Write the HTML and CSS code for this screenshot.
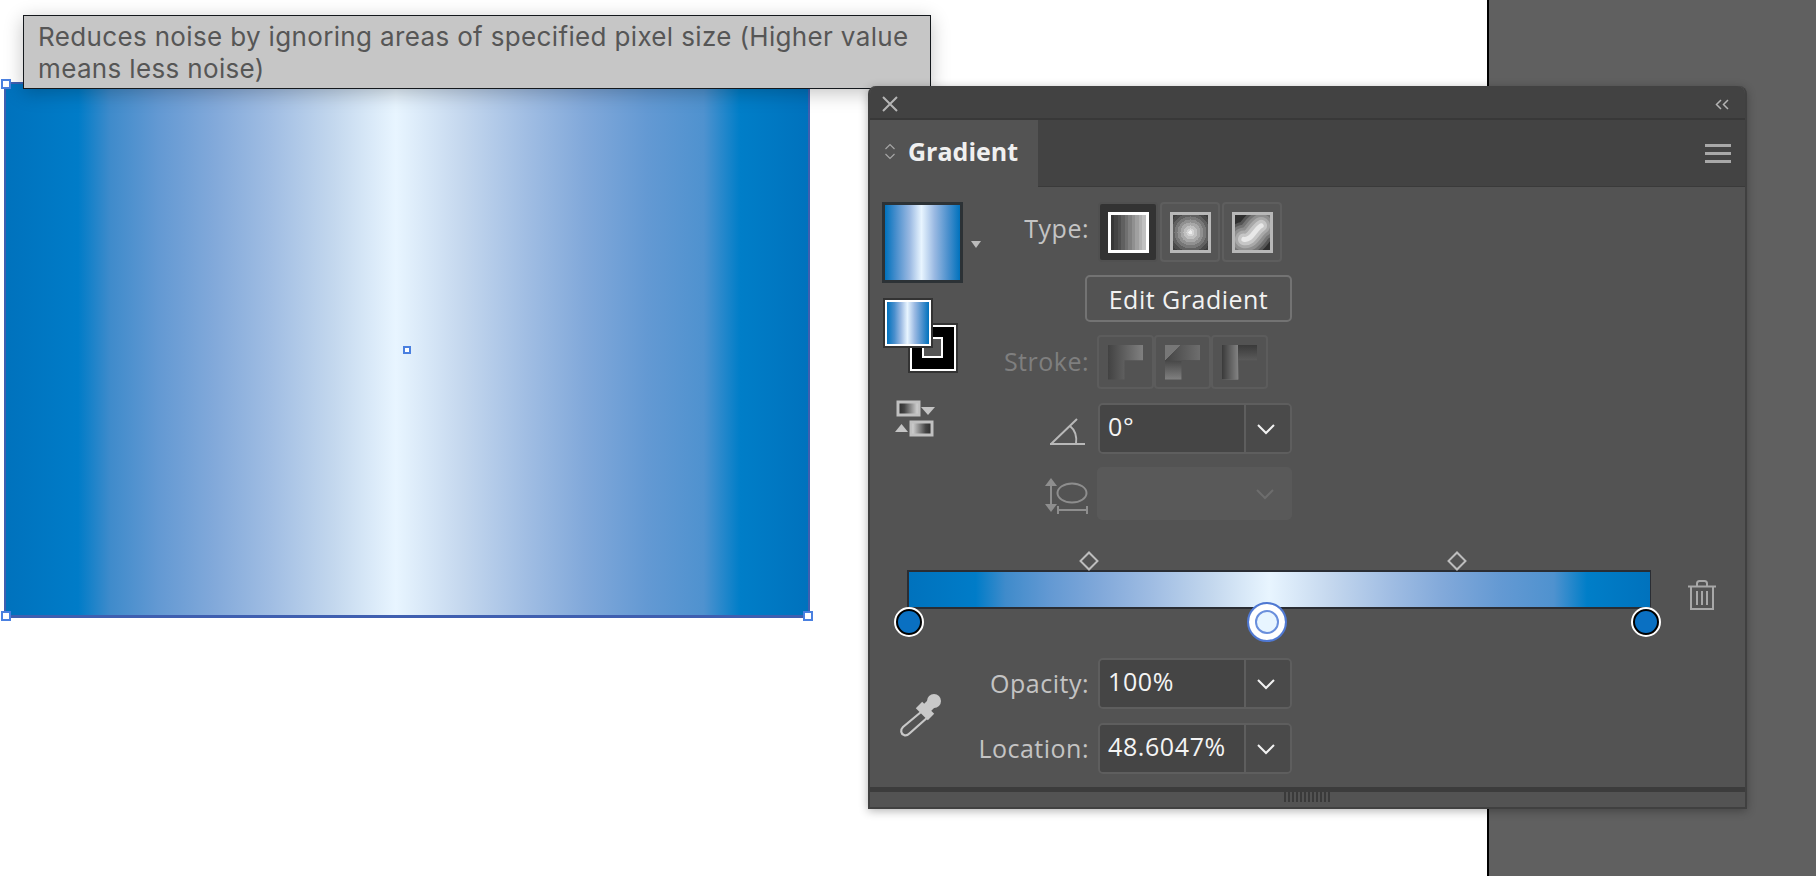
FILE: index.html
```html
<!DOCTYPE html>
<html lang="en">
<head>
  <meta charset="UTF-8" />
  <title>Gradient panel</title>
  <link rel="stylesheet" href="styles.css">
</head>
<body>
  <div class="canvas">
    <div class="artboard">
      <span class="handle handle-tl"></span>
      <span class="handle handle-bl"></span>
      <span class="handle handle-br"></span>
      <span class="handle handle-center"></span>
    </div>
  </div>
  <div class="pasteboard"></div>

  <div class="tooltip">Reduces noise by ignoring areas of specified pixel size (Higher value means less noise)</div>

  <div class="panel">
    <div class="panel-top">
      <svg class="icon-close" viewBox="0 0 18 18"><path d="M2 2L16 16M16 2L2 16"/></svg>
      <svg class="icon-collapse" viewBox="0 0 14 11"><path d="M6 1L1.500 5.500L6 10M13 1L8.500 5.500L13 10"/></svg>
    </div>

    <div class="panel-tabs">
      <div class="tab">
        <svg class="icon-updown" viewBox="0 0 12 17"><path d="M1.500 6L6 1.500L10.500 6M1.500 11L6 15.500L10.500 11"/></svg>
        <span>Gradient</span>
      </div>
      <div class="panel-menu"><i></i><i></i><i></i></div>
    </div>

    <div class="panel-body">
      <div class="controls">
        <div class="swatches">
          <div class="swatch-row">
            <div class="swatch-main"></div>
            <span class="swatch-arrow"></span>
          </div>
          <div class="fill-stroke">
            <div class="stroke-box"><div class="stroke-hole"></div></div>
            <div class="fill-box"></div>
          </div>
          <svg class="icon-swap" viewBox="0 0 44 38">
            <defs>
              <linearGradient id="swap-a"><stop offset="0" stop-color="#2a2a2a"/><stop offset="0.300" stop-color="#444"/><stop offset="1" stop-color="#e0e0e0"/></linearGradient>
              <linearGradient id="swap-b"><stop offset="0" stop-color="#e0e0e0"/><stop offset="0.700" stop-color="#444"/><stop offset="1" stop-color="#2a2a2a"/></linearGradient>
            </defs>
            <rect x="4" y="2" width="21" height="13" fill="url(#swap-a)" stroke="#c0c0c0" stroke-width="3"/>
            <path d="M27 7H41L34 15Z" fill="#c4c4c4"/>
            <path d="M1 32H14L7.500 24Z" fill="#c4c4c4"/>
            <rect x="17" y="22" width="21" height="13" fill="url(#swap-b)" stroke="#c0c0c0" stroke-width="3"/>
          </svg>
        </div>

        <div class="rows">
          <div class="row row-type">
            <label class="row-label">Type:</label>
            <div class="btn-group">
              <button class="type-btn active"><span class="grad-icon grad-linear"></span></button>
              <button class="type-btn"><span class="grad-icon grad-radial"></span></button>
              <button class="type-btn">
                <span class="grad-icon grad-free">
                  <svg viewBox="0 0 36 36" preserveAspectRatio="none">
                    <g fill="none" stroke-linecap="round">
                      <path d="M9 25C17 27 20 15 27 11" stroke="#555" stroke-width="36"/>
                      <path d="M9 25C17 27 20 15 27 11" stroke="#747474" stroke-width="30"/>
                      <path d="M9 25C17 27 20 15 27 11" stroke="#8e8e8e" stroke-width="24"/>
                      <path d="M9 25C17 27 20 15 27 11" stroke="#a8a8a8" stroke-width="18"/>
                      <path d="M9 25C17 27 20 15 27 11" stroke="#c6c6c6" stroke-width="12"/>
                      <path d="M9 25C17 27 20 15 27 11" stroke="#e8e8e8" stroke-width="5"/>
                    </g>
                  </svg>
                </span>
              </button>
            </div>
          </div>

          <div class="row row-edit">
            <button class="edit-btn">Edit Gradient</button>
          </div>

          <div class="row row-stroke">
            <label class="row-label dim">Stroke:</label>
            <div class="btn-group btn-group-dim">
              <span class="stroke-btn"><span class="stroke-icon stroke-along"></span></span>
              <span class="stroke-btn"><span class="stroke-icon stroke-within"></span></span>
              <span class="stroke-btn"><span class="stroke-icon stroke-across"></span></span>
            </div>
          </div>

          <div class="row row-angle">
            <div class="row-label">
              <svg class="icon-angle" viewBox="0 0 36 30"><path d="M1 27H36M2 27L28 2M21 9C26 13 28 20 27 27"/></svg>
            </div>
            <div class="field">
              <span class="field-value">0°</span>
              <span class="field-arrow"><svg class="chev" viewBox="0 0 20 12"><path d="M2 2L10 10L18 2"/></svg></span>
            </div>
          </div>

          <div class="row row-aspect">
            <div class="row-label">
              <svg class="icon-aspect" viewBox="0 0 44 38">
                <path d="M6 6V30" class="aspect-line"/>
                <path d="M0 9L6 1L12 9ZM0 27L6 35L12 27Z" class="aspect-fill"/>
                <ellipse cx="27" cy="16" rx="14.500" ry="9.500" class="aspect-line"/>
                <path d="M13 33H42M13 29V37M42 29V37" class="aspect-line"/>
              </svg>
            </div>
            <div class="field-disabled">
              <svg class="chev" viewBox="0 0 20 12"><path d="M2 2L10 10L18 2"/></svg>
            </div>
          </div>
        </div>
      </div>

      <div class="slider">
        <span class="midpoint midpoint-a"></span>
        <span class="midpoint midpoint-b"></span>
        <div class="slider-track"></div>
        <span class="stop stop-left"></span>
        <span class="stop stop-mid"></span>
        <span class="stop stop-right"></span>
        <svg class="icon-trash" viewBox="0 0 28 30">
          <path d="M0 6.500H28M9 6V3.500C9 2 10 1 11.500 1H16.500C18 1 19 2 19 3.500V6M3 7V29H25V7M9 11V25M14 11V25M19 11V25"/>
        </svg>
      </div>

      <div class="bottom">
        <div class="dropper">
          <svg class="icon-dropper" viewBox="0 0 46 46">
            <circle cx="38" cy="9" r="7" fill="#c8c8c8"/>
            <path d="M38 9L28 19" stroke="#c8c8c8" stroke-width="10" fill="none"/>
            <path d="M23 13L35 25" stroke="#c8c8c8" stroke-width="9" fill="none"/>
            <path d="M25 20L7 35C4 38 5 42 8 43C10 44 12 43 14 41L32 25" stroke="#c8c8c8" stroke-width="2.200" fill="none"/>
          </svg>
        </div>
        <div class="rows">
          <div class="row row-opacity">
            <label class="row-label">Opacity:</label>
            <div class="field">
              <span class="field-value">100%</span>
              <span class="field-arrow"><svg class="chev" viewBox="0 0 20 12"><path d="M2 2L10 10L18 2"/></svg></span>
            </div>
          </div>
          <div class="row row-location">
            <label class="row-label">Location:</label>
            <div class="field">
              <span class="field-value">48.6047%</span>
              <span class="field-arrow"><svg class="chev" viewBox="0 0 20 12"><path d="M2 2L10 10L18 2"/></svg></span>
            </div>
          </div>
        </div>
      </div>
    </div>

    <div class="panel-foot"><span class="gripper"></span></div>
  </div>
</body>
</html>
```

FILE: styles.css
```css
* {
  margin: 0;
  padding: 0;
  box-sizing: border-box;
}

body {
  width: 1816px;
  height: 876px;
  overflow: hidden;
  display: flex;
  position: relative;
  font-family: 'Open Sans', sans-serif;
}

.canvas {
  width: 1489px;
  height: 100%;
  background: #fff;
  border-right: 2px solid #000;
}

.pasteboard {
  flex: 1;
  background: #606060;
}

/* artboard with the gradient applied */
.artboard {
  position: absolute;
  left: 4px;
  top: 82px;
  width: 806px;
  height: 536px;
  border: 2px solid #3f5fb0;
  border-bottom-width: 3px;
  background: linear-gradient(90deg, #0072bd 0%, #007cc8 9%, #3f8bcb 13%, #6399d3 19%, #82a9da 26%, #a0bde3 33%, #c4d8ee 41%, #e8f5ff 48.600%, #c4d7ee 57%, #a0bde3 65%, #82a9da 72%, #6399d3 80%, #4f92cf 87%, #007ec8 91.500%, #0072bd 100%);
}

.handle {
  position: absolute;
  width: 10px;
  height: 10px;
  background: #fff;
  border: 2px solid #4a80e0;
}

.handle-tl { left: -5px; top: -5px; }
.handle-bl { left: -5px; bottom: -6px; }
.handle-br { right: -5px; bottom: -6px; }
.handle-center { left: 397px; top: 262px; width: 8px; height: 8px; }

.tooltip {
  position: absolute;
  left: 23px;
  top: 15px;
  width: 908px;
  height: 74px;
  padding: 5px 14px;
  background: #c6c6c6;
  border: 1px solid #14181c;
  box-shadow: 0 4px 18px rgba(0, 0, 0, 0.24);
  color: #565656;
  font-family: 'Inter', sans-serif;
  font-size: 26px;
  letter-spacing: 0.35px;
  line-height: 32px;
}

/* floating panel */
.panel {
  position: absolute;
  left: 868px;
  top: 86px;
  width: 879px;
  height: 723px;
  display: flex;
  flex-direction: column;
  background: #535353;
  border: 2px solid #404040;
  border-top: none;
  border-radius: 8px 8px 0 0;
  box-shadow: 0 2px 10px rgba(0, 0, 0, 0.3);
}

.panel-top {
  height: 34px;
  flex: none;
  display: flex;
  align-items: center;
  justify-content: space-between;
  padding: 4px 16px 0 11px;
  background: #424242;
  border-bottom: 2px solid #383838;
  border-radius: 8px 8px 0 0;
}

.icon-close {
  width: 18px;
  height: 18px;
  fill: none;
  stroke: #b4b4b4;
  stroke-width: 2;
}

.icon-collapse {
  width: 14px;
  height: 11px;
  fill: none;
  stroke: #b4b4b4;
  stroke-width: 1.500;
}

.panel-tabs {
  height: 67px;
  flex: none;
  display: flex;
  align-items: center;
  justify-content: space-between;
  background: #434343;
  border-bottom: 1px solid #3a3a3a;
  padding-right: 14px;
}

.tab {
  width: 168px;
  height: 67px;
  display: flex;
  align-items: center;
  gap: 12px;
  padding: 0 0 4px 14px;
  background: #535353;
  color: #f0f0f0;
  font-size: 25px;
  font-weight: 700;
}

.icon-updown {
  width: 12px;
  height: 17px;
  fill: none;
  stroke: #a6a6a6;
  stroke-width: 1.200;
}

.panel-menu {
  display: flex;
  flex-direction: column;
  gap: 5px;
  width: 26px;
}

.panel-menu i {
  display: block;
  height: 3px;
  background: #a8a8a8;
}

.panel-body {
  flex: 1;
  padding: 15px 0 0 12px;
}

.controls {
  display: flex;
}

.swatches {
  width: 97px;
  flex: none;
}

.swatch-row {
  display: flex;
  align-items: center;
  gap: 8px;
}

.swatch-main {
  width: 81px;
  height: 81px;
  flex: none;
  border: 3px solid #2c3236;
  background: linear-gradient(90deg, #0072bd 0%, #4a8fcd 15%, #9ab9e2 33%, #e8f5ff 48.600%, #9ab9e2 66%, #4b90cd 84%, #0072bd 100%);
}

.swatch-arrow {
  flex: none;
  width: 0;
  height: 0;
  margin-top: 4px;
  border-left: 5.500px solid transparent;
  border-right: 5.500px solid transparent;
  border-top: 7px solid #bcbcbc;
}

.fill-stroke {
  position: relative;
  width: 77px;
  height: 76px;
  margin: 15px 0 0 1px;
}

.fill-box {
  position: absolute;
  left: 2px;
  top: 2px;
  width: 46px;
  height: 46px;
  border: 2px solid #fff;
  outline: 2px solid #333;
  background: linear-gradient(90deg, #0072bd 0%, #4a8fcd 18%, #9ab9e2 33%, #e8f5ff 48.600%, #9ab9e2 66%, #4b90cd 84%, #0072bd 100%);
}

.stroke-box {
  position: absolute;
  left: 27px;
  top: 27px;
  width: 46px;
  height: 46px;
  background: #000;
  border: 2px solid #fff;
  outline: 2px solid #333;
}

.stroke-hole {
  position: absolute;
  left: 10px;
  top: 10px;
  width: 21px;
  height: 21px;
  background: #555;
  border: 2px solid #fff;
}

.icon-swap {
  display: block;
  width: 44px;
  height: 38px;
  margin: 26px 0 0 12px;
}

.rows {
  display: flex;
  flex-direction: column;
}

.row {
  display: flex;
  align-items: center;
  gap: 9px;
}

.row-label {
  width: 110px;
  flex: none;
  display: flex;
  justify-content: flex-end;
  align-items: center;
  color: #c4c4c4;
  font-size: 25px;
  letter-spacing: 0.5px;
}

.row-label.dim {
  color: #7f7f7f;
  padding-bottom: 2px;
}

.row-type { height: 60px; }
.row-type .row-label { padding-bottom: 8px; }
.row-edit { height: 47px; margin-top: 13px; padding-left: 106px; }
.row-stroke { height: 54px; margin-top: 13px; }
.row-angle { height: 51px; margin-top: 14px; }
.row-aspect { height: 53px; margin-top: 13px; }
.row-opacity { height: 51px; }
.row-location { height: 51px; margin-top: 14px; }
.row-opacity .row-label, .row-location .row-label { padding-bottom: 2px; }

.btn-group {
  display: flex;
  gap: 2px;
}

.type-btn {
  width: 60px;
  height: 60px;
  display: flex;
  align-items: center;
  justify-content: center;
  background: #555;
  border: 2px solid #5e5e5e;
  border-radius: 4px;
}

.type-btn.active {
  background: #333;
  border-color: #505050;
}

.grad-icon {
  display: block;
  width: 41px;
  height: 41px;
  border: 3px solid #b8b8b8;
  overflow: hidden;
}

.active .grad-icon {
  border-color: #fff;
}

.grad-linear {
  background: linear-gradient(90deg, #383838 0 10%, #444 10% 20%, #505050 20% 30%, #606060 30% 40%, #707070 40% 50%, #808080 50% 60%, #909090 60% 70%, #a0a0a0 70% 80%, #b0b0b0 80% 90%, #c0c0c0 90%);
}

.grad-radial {
  background: radial-gradient(circle, #ececec 0 2px, #d4d4d4 2px 4px, #c0c0c0 4px 7px, #a8a8a8 7px 10px, #909090 10px 13px, #787878 13px 16px, #606060 16px 19px, #4a4a4a 19px 22px, #3c3c3c 22px);
}

.grad-free svg {
  display: block;
  width: 100%;
  height: 100%;
  background: #2e2e2e;
}

.edit-btn {
  width: 207px;
  height: 47px;
  background: #535353;
  border: 2px solid #737373;
  border-radius: 5px;
  color: #f2f2f2;
  font-family: inherit;
  font-size: 25px;
  letter-spacing: 0.5px;
}

.btn-group-dim {
  gap: 0;
  margin-left: -1px;
}

.stroke-btn {
  width: 57px;
  height: 54px;
  display: flex;
  align-items: center;
  justify-content: center;
  border: 2px solid #5c5c5c;
  border-radius: 4px;
}

.stroke-icon {
  display: block;
  width: 35px;
  height: 35px;
  clip-path: polygon(0 0, 100% 0, 100% 45%, 47% 45%, 47% 100%, 0 100%);
}

.stroke-along {
  background: linear-gradient(90deg, #424242, #808080);
}

.stroke-within {
  background:
    linear-gradient(135deg, #777 0 22%, transparent 22%),
    linear-gradient(90deg, #444, #6e6e6e) top right / 100% 45% no-repeat,
    linear-gradient(180deg, #484848 45%, #828282);
}

.stroke-across {
  background:
    linear-gradient(90deg, #3a3a3a, #848484) left / 47% 100% no-repeat,
    linear-gradient(180deg, #3a3a3a, #848484);
}

.icon-angle {
  width: 36px;
  height: 30px;
  margin: 6px 4px 0 0;
  fill: none;
  stroke: #b8b8b8;
  stroke-width: 2;
}

.icon-aspect {
  width: 44px;
  height: 38px;
  margin: 4px 0 0 0;
}

.aspect-line {
  fill: none;
  stroke: #8e8e8e;
  stroke-width: 2;
}

.aspect-fill {
  fill: #8e8e8e;
}

.field {
  width: 194px;
  height: 51px;
  display: flex;
  border: 2px solid #5e5e5e;
  border-radius: 5px;
  overflow: hidden;
}

.field-value {
  flex: 1;
  padding: 0 0 5px 8px;
  display: flex;
  align-items: center;
  background: #454545;
  color: #f4f4f4;
  font-size: 25px;
  letter-spacing: 0.6px;
}

.field-arrow {
  width: 46px;
  flex: none;
  display: flex;
  align-items: center;
  justify-content: center;
  padding-right: 4px;
  background: #4a4a4a;
  border-left: 2px solid #5e5e5e;
}

.chev {
  width: 20px;
  height: 12px;
  fill: none;
  stroke: #f2f2f2;
  stroke-width: 2;
}

.field-disabled {
  width: 195px;
  height: 53px;
  margin-left: -1px;
  display: flex;
  align-items: center;
  justify-content: flex-end;
  padding-right: 17px;
  background: #595959;
  border-radius: 5px;
}

.field-disabled .chev {
  stroke: #6d6d6d;
}

/* gradient slider */
.slider {
  position: relative;
  width: 744px;
  margin: 50px 0 49px 25px;
}

.slider-track {
  height: 39px;
  border: 2px solid #2a2d33;
  border-right-width: 1px;
  background: linear-gradient(90deg, #0072bd 0%, #007cc8 9%, #3f8bcb 13%, #6399d3 19%, #82a9da 26%, #a0bde3 33%, #c4d8ee 41%, #e8f5ff 48.600%, #c4d7ee 57%, #a0bde3 65%, #82a9da 72%, #6399d3 80%, #4f92cf 87%, #007ec8 91.500%, #0072bd 100%);
}

.midpoint {
  position: absolute;
  top: -16px;
  width: 14px;
  height: 14px;
  border: 2px solid #bdbdbd;
  transform: rotate(45deg);
}

.midpoint-a { left: 175px; }
.midpoint-b { left: 543px; }

.stop {
  position: absolute;
  top: 38px;
  width: 28px;
  height: 28px;
  border-radius: 50%;
  background: #0a70c2;
  border: 3px solid #000;
  outline: 2.500px solid #fff;
  outline-offset: -1px;
}

.stop-left { left: -12px; }
.stop-right { left: 725px; }

.stop-mid {
  left: 340px;
  top: 32px;
  width: 40px;
  height: 40px;
  background: #e8f5ff;
  border: 2px solid #4f78d2;
  outline: none;
  box-shadow: inset 0 0 0 6px #fff, inset 0 0 0 8px #6a8fdc;
}

.icon-trash {
  position: absolute;
  left: 781px;
  top: 10px;
  width: 28px;
  height: 30px;
  fill: none;
  stroke: #a8a8a8;
  stroke-width: 2;
}

.bottom {
  display: flex;
}

.dropper {
  width: 97px;
  flex: none;
  padding: 34px 0 0 14px;
}

.icon-dropper {
  display: block;
  width: 46px;
  height: 46px;
}

.panel-foot {
  flex: none;
  height: 20px;
  display: flex;
  justify-content: center;
  align-items: flex-start;
  background: #535353;
  border-top: 5px solid #3c3c3c;
  padding-left: 1px;
}

.gripper {
  width: 48px;
  height: 10px;
  background: repeating-linear-gradient(90deg, #3a3a3a 0 2px, transparent 2px 4px);
}
```
